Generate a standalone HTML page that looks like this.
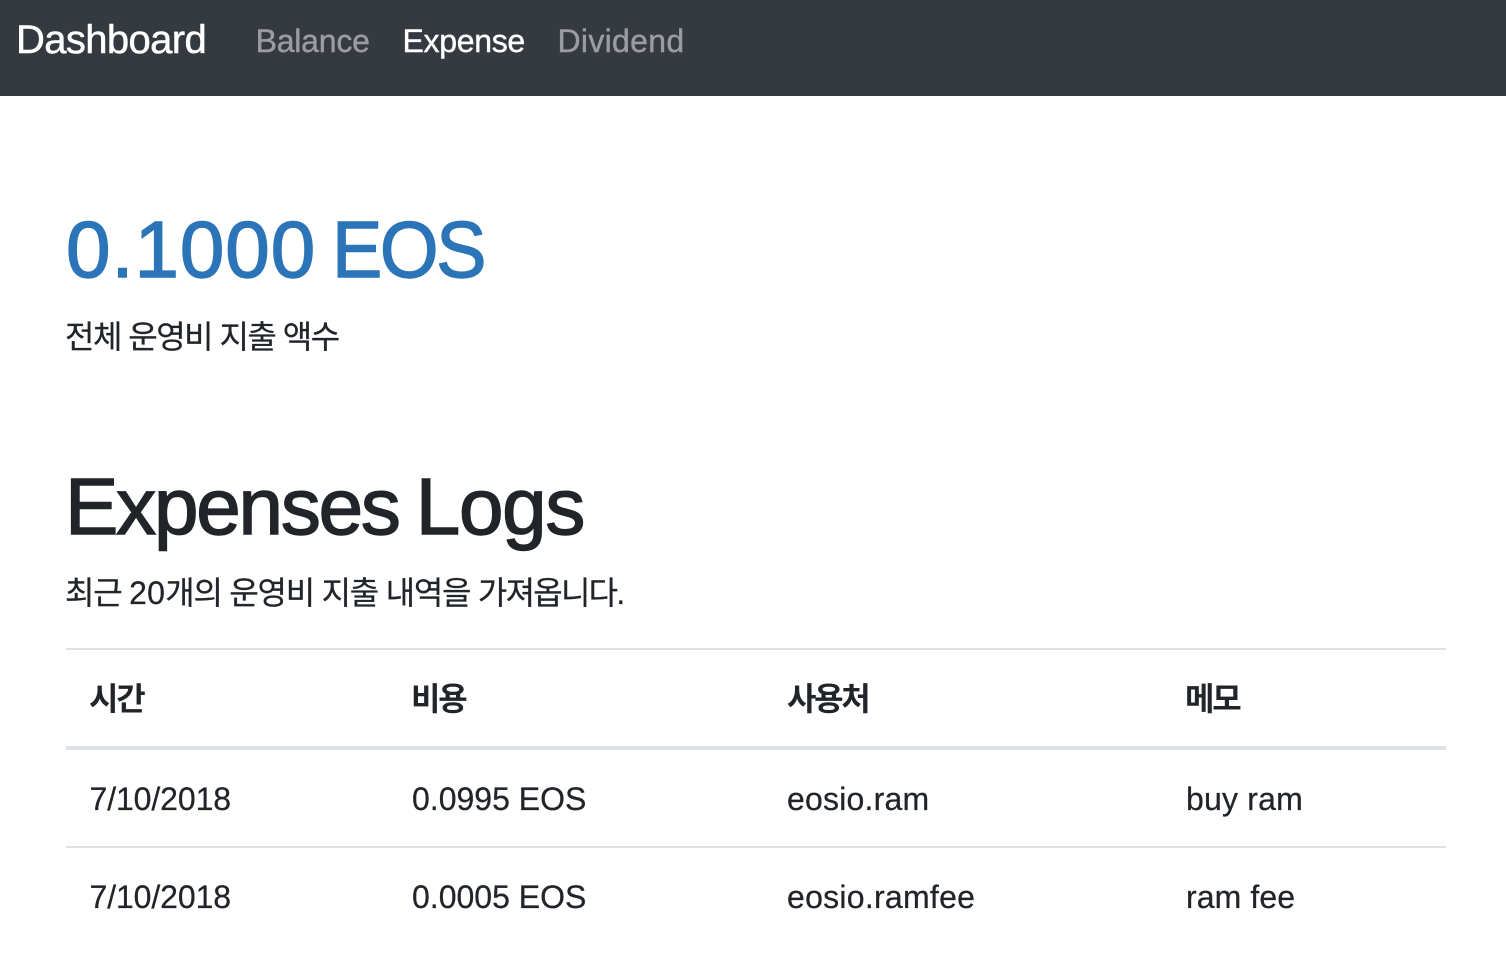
<!DOCTYPE html>
<html lang="ko">
<head>
<meta charset="utf-8">
<title>Dashboard</title>
<style>
html,body{margin:0;padding:0;background:#fff;width:1506px;height:978px;overflow:hidden}
body{position:relative;font-family:"Liberation Sans","Noto Sans CJK KR",sans-serif;color:#212529}
.t{position:absolute;white-space:nowrap;font-size:32px;line-height:40px;-webkit-text-stroke:.25px currentColor}
.b{font-size:80px;line-height:100px;-webkit-text-stroke:1.4px currentColor}
.n{font-size:32px;line-height:40px;-webkit-text-stroke:.4px currentColor}
.th{font-weight:700;-webkit-text-stroke:0}
.r{position:absolute;left:66px;width:1380px;background:#dee2e6}
#nav{position:absolute;left:0;top:0;width:1506px;height:96px;background:#343a40}
</style>
</head>
<body>
<div id="nav"></div>
<div class="t" style="left:16px;top:15px;font-size:40px;line-height:50px;color:#fff;letter-spacing:-.62px;-webkit-text-stroke:.5px #fff">Dashboard</div>
<div class="t n" style="left:255.6px;top:21px;color:#9a9da0;letter-spacing:-.22px">Balance</div>
<div class="t n" style="left:402.5px;top:21px;color:#fff;letter-spacing:-.3px">Expense</div>
<div class="t n" style="left:557.5px;top:21px;color:#9a9da0;letter-spacing:.3px">Dividend</div>

<div class="t b" style="left:66px;top:200px;color:#2b74b8;letter-spacing:.9px">0.1000</div>
<div class="t b" style="left:331.5px;top:200px;color:#2b74b8;letter-spacing:-2.6px;transform:scaleX(.943);transform-origin:0 50%">EOS</div>
<div class="t" style="left:65px;top:317px;letter-spacing:-1.5px">전체 운영비 지출 액수</div>

<div class="t b" style="left:65px;top:457px;letter-spacing:-2.2px;word-spacing:-3px">Expenses <span style="letter-spacing:-1.3px">Logs</span></div>
<div class="t" style="left:65px;top:573px;letter-spacing:-1.24px">최근 <span style="letter-spacing:.3px">20</span>개의 운영비 지출 내역을 <span style="letter-spacing:-1.75px">가져옵니다.</span></div>

<div class="r" style="top:648px;height:2px"></div>
<div class="t th" style="left:89px;top:679px;letter-spacing:-2.2px">시간</div>
<div class="t th" style="left:411px;top:679px;letter-spacing:-2.2px">비용</div>
<div class="t th" style="left:787px;top:679px;letter-spacing:-2.3px">사용처</div>
<div class="t th" style="left:1185px;top:679px;letter-spacing:-2.2px">메모</div>
<div class="r" style="top:746px;height:4px"></div>

<div class="t" style="left:89.5px;top:779px;letter-spacing:-.1px">7/10/2018</div>
<div class="t" style="left:412px;top:779px;letter-spacing:0">0.0995 EOS</div>
<div class="t" style="left:787px;top:779px;letter-spacing:.2px">eosio.ram</div>
<div class="t" style="left:1186px;top:779px;letter-spacing:.2px">buy ram</div>
<div class="r" style="top:846px;height:2px"></div>

<div class="t" style="left:89.5px;top:877px;letter-spacing:-.1px">7/10/2018</div>
<div class="t" style="left:412px;top:877px;letter-spacing:0">0.0005 EOS</div>
<div class="t" style="left:787px;top:877px;letter-spacing:.27px">eosio.ramfee</div>
<div class="t" style="left:1186px;top:877px;letter-spacing:.1px">ram fee</div>
</body>
</html>
